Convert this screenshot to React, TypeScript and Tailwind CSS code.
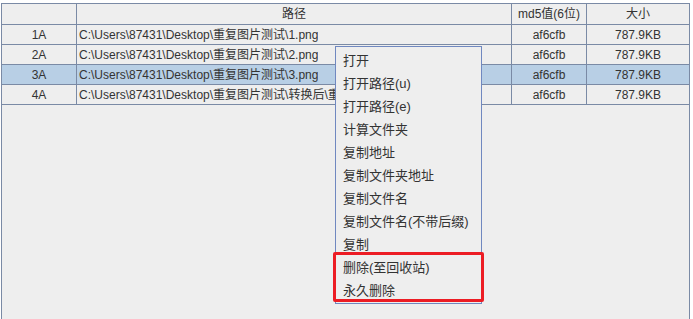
import React from "react";

type Row = { id: string; path: string; md5: string; size: string };

const rows: Row[] = [
  { id: "1A", path: "C:\\Users\\87431\\Desktop\\重复图片测试\\1.png", md5: "af6cfb", size: "787.9KB" },
  { id: "2A", path: "C:\\Users\\87431\\Desktop\\重复图片测试\\2.png", md5: "af6cfb", size: "787.9KB" },
  { id: "3A", path: "C:\\Users\\87431\\Desktop\\重复图片测试\\3.png", md5: "af6cfb", size: "787.9KB" },
  { id: "4A", path: "C:\\Users\\87431\\Desktop\\重复图片测试\\转换后\\重复图片4.png", md5: "af6cfb", size: "787.9KB" },
];

const menuItems = [
  "打开",
  "打开路径(u)",
  "打开路径(e)",
  "计算文件夹",
  "复制地址",
  "复制文件夹地址",
  "复制文件名",
  "复制文件名(不带后缀)",
  "复制",
  "删除(至回收站)",
  "永久删除",
];

const font = { fontFamily: '"Liberation Sans", "Noto Sans CJK SC", sans-serif' };

export default function App() {
  const selected = "3A";

  return (
    <div className="relative w-[693px] h-[319px] bg-white overflow-hidden text-[#333]" style={font}>
      <div className="absolute left-[1px] top-[3px] w-[689px] h-[330px] border border-[#7a8aa5] bg-[#eeeeee]">
        {/* header */}
        <div className="flex h-[21px] border-b border-[#7a8aa5] text-[12px]">
          <div className="w-[75px] border-r border-[#7a8aa5]" />
          <div className="w-[435px] border-r border-[#7a8aa5] flex items-center justify-center">路径</div>
          <div className="w-[75px] border-r border-[#7a8aa5] flex items-center justify-center">md5值(6位)</div>
          <div className="flex-1 flex items-center justify-center">大小</div>
        </div>

        {rows.map((row) => (
          <div
            key={row.id}
            className={`flex h-[20px] border-b border-[#7a8aa5] text-[12px] ${
              row.id === selected ? "bg-[#b8cfe5]" : ""
            }`}
          >
            <div className="w-[75px] border-r border-[#7a8aa5] flex items-center justify-center">{row.id}</div>
            <div className="w-[435px] border-r border-[#7a8aa5] flex items-center pl-[2px] whitespace-nowrap">
              {/* clipped where the popup menu covers the cell */}
              <span className="block max-w-[256px] overflow-hidden">{row.path}</span>
            </div>
            <div className="w-[75px] border-r border-[#7a8aa5] flex items-center justify-center">{row.md5}</div>
            <div className="flex-1 flex items-center justify-center">{row.size}</div>
          </div>
        ))}
      </div>

      {/* context menu */}
      <div className="absolute left-[335px] top-[46px] w-[147px] h-[258px] border border-[#7088c0] bg-[#eeeeee] pt-[2px] text-[13px] text-[#333]">
        {menuItems.map((item) => (
          <div key={item} className="h-[23px] flex items-center pl-[7px] whitespace-nowrap">
            {item}
          </div>
        ))}
      </div>

      {/* red annotation box */}
      <div className="absolute left-[333px] top-[252px] w-[151px] h-[50px] border-[3px] border-[#ec1c24] rounded-[2px]" />
    </div>
  );
}
